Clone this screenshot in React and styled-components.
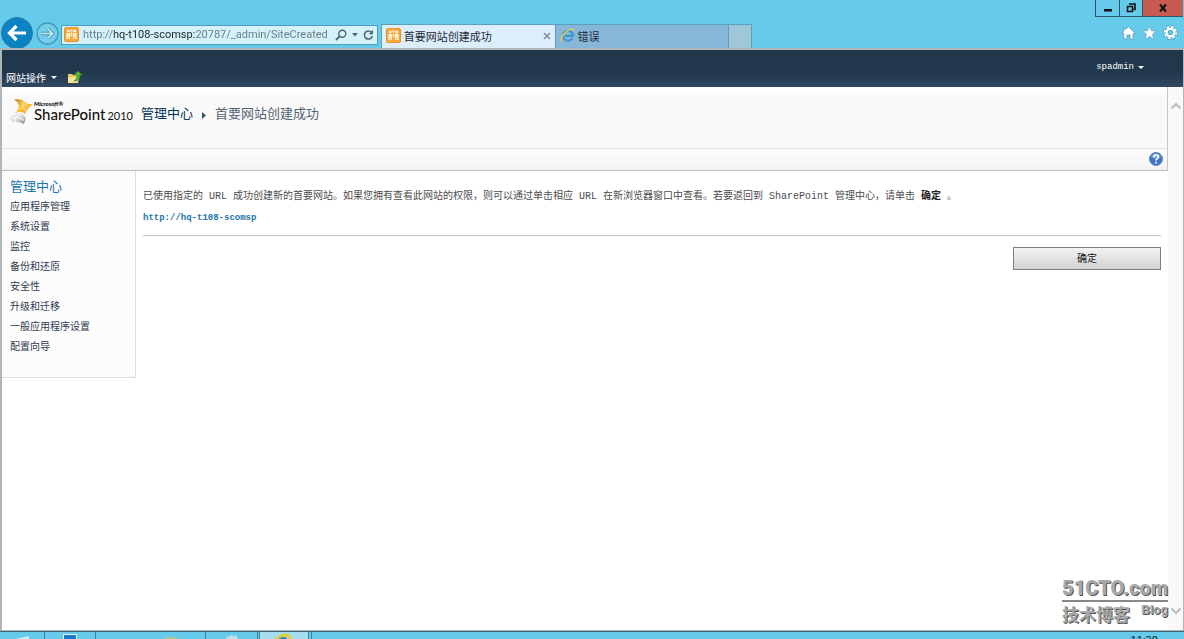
import React from "react";
import styled, { createGlobalStyle } from "styled-components";

const sections = [
  "应用程序管理",
  "系统设置",
  "监控",
  "备份和还原",
  "安全性",
  "升级和迁移",
  "一般应用程序设置",
  "配置向导"
];

const SiteIcon = () => (
  <svg width="15" height="15" viewBox="0 0 15 15">
    <rect x="0.5" y="0.5" width="14" height="14" rx="1.5" fill="#f8aa3c" stroke="#e9922a" />
    <path d="M3 3h2.500v2H3zM9.500 3H12v2H9.500zM6.500 2.500h2v2h-2z" fill="#fff6df" />
    <path d="M2.500 6H6v6H4.800V9.500H4V12H2.500zM9 6h3.500v6H11V9.500h-.8V12H9zM6.800 5.500h1.400V9H6.800z" fill="#fff6df" />
  </svg>
);

const BrowserIcon = () => (
  <svg width="15" height="15" viewBox="0 0 15 15">
    <path
      d="M12.300 10.300A5 5 0 1 1 13 7.800H4.500"
      fill="none"
      stroke="#3d97d3"
      strokeWidth="2.200"
    />
    <path
      d="M2 13.500C-.5 12 3 5 8 2.300c3-1.700 5.500-1.700 5.300.7"
      fill="none"
      stroke="#e6cf4d"
      strokeWidth="1.400"
    />
  </svg>
);

const SharePointMark = () => (
  <svg width="24" height="28" viewBox="0 0 24 28">
    <defs>
      <linearGradient id="gold" x1="0" y1="0" x2="1" y2="1">
        <stop offset="0" stopColor="#c9791f" />
        <stop offset="0.45" stopColor="#fbc63f" />
        <stop offset="1" stopColor="#ee9420" />
      </linearGradient>
      <linearGradient id="silver" x1="0" y1="0" x2="1" y2="1">
        <stop offset="0" stopColor="#ededed" />
        <stop offset="0.6" stopColor="#cfcfcf" />
        <stop offset="1" stopColor="#777777" />
      </linearGradient>
    </defs>
    <path d="M4 2.500C9 1.500 14 3 16.500 6.500L23 7.500C20 9 17.500 12 15 17 12.500 14.500 9 14.500 5 16.500 8 13 9.500 10 8.500 7.500 8 5.500 6.500 4 4 2.500z" fill="url(#gold)" />
    <path d="M9 5c3 0 5 1 7 3M10 8.500c3-.5 6 0 8 1M9.500 12c2.500-1 5-1 7 .5M13 3.500c-1 4 0 7 2 11" fill="none" stroke="#fde7a0" strokeWidth="0.700" />
    <path d="M1 20.500C4 17.500 11 15 14.500 18.500 16.500 21 15.500 24 13.500 27 10.500 24.500 7 25.500 3 25 0 24 0 22 1 20.500z" fill="url(#silver)" />
    <path d="M2 21.500c4-2 8-1.500 12 2M2 24c2-4 5-6 9-6M6 25.500c-1-2-1-4 1-6.500" fill="none" stroke="#ffffff" strokeWidth="0.900" />
  </svg>
);

const FolderUpIcon = () => (
  <svg width="14" height="13" viewBox="0 0 14 13">
    <path d="M0 3h4l1 1h5v8H0z" fill="#e8c765" />
    <path d="M0 6h11l-1 6H0z" fill="#f8e29a" />
    <path d="M10 0l4 4h-2c0 4-2 6-6 6 2-1 3-3 3-6H6z" fill="#52b836" stroke="#2c8a1c" strokeWidth="0.600" />
  </svg>
);

const App = () => {
  return (
    <Window>
      <GlobalStyle />

      <Chrome>
        <Caption>
          <CaptionButton aria-label="Minimize" $width={23}>
            <svg width="10" height="10" viewBox="0 0 10 10">
              <path d="M1 6h8v2.500H1z" fill="#111" />
            </svg>
          </CaptionButton>
          <CaptionButton aria-label="Restore" $width={22}>
            <svg width="10" height="10" viewBox="0 0 10 10">
              <path d="M3 1h6v5.500H7.500M1.500 3.500h5v5h-5z" fill="none" stroke="#111" strokeWidth="1.600" />
            </svg>
          </CaptionButton>
          <CaptionButton aria-label="Close" $width={40} $close>
            <svg width="10" height="10" viewBox="0 0 10 10">
              <path d="M2 1.500l6 7M8 1.500l-6 7" stroke="#111" strokeWidth="2" />
            </svg>
          </CaptionButton>
        </Caption>

        <Navigation>
          <BackButton aria-label="Back">
            <svg width="32" height="32" viewBox="0 0 32 32">
              <circle cx="16" cy="16" r="15.500" fill="#0b82c4" stroke="#2b7ba3" />
              <path d="M25 16H9M15.500 9l-7 7 7 7" fill="none" stroke="#fff" strokeWidth="3.200" />
            </svg>
          </BackButton>
          <ForwardButton aria-label="Forward">
            <svg width="23" height="23" viewBox="0 0 23 23">
              <circle cx="11.500" cy="11.500" r="10.500" fill="#74cdea" stroke="#4599b8" strokeWidth="1.300" />
              <path d="M5.500 11.500h11M12 7l4.500 4.500L12 16" fill="none" stroke="#4599b8" strokeWidth="3.400" />
              <path d="M5.500 11.500h11M12 7l4.500 4.500L12 16" fill="none" stroke="#c9edf8" strokeWidth="1.600" />
            </svg>
          </ForwardButton>

          <AddressBar>
            <SiteIcon />
            <Address
              type="text"
              aria-label="Address"
              defaultValue="http://hq-t108-scomsp:20787/_admin/SiteCreated"
            />
            <AddressButton aria-label="Search">
              <svg width="12" height="12" viewBox="0 0 12 12">
                <path d="M1 11l4-4" stroke="#4d6670" strokeWidth="1.800" />
                <circle cx="7.300" cy="4.700" r="3.500" fill="none" stroke="#4d6670" strokeWidth="1.400" />
              </svg>
            </AddressButton>
            <AddressButton aria-label="Show addresses">
              <svg width="6" height="4" viewBox="0 0 6 4">
                <path d="M0 0h6L3 3.500z" fill="#4d6670" />
              </svg>
            </AddressButton>
            <AddressButton aria-label="Refresh">
              <svg width="11" height="12" viewBox="0 0 11 12">
                <path d="M9 4.300A4 4 0 1 0 9.300 7" fill="none" stroke="#4d6670" strokeWidth="1.500" />
                <path d="M10 .8v4.400H5.800z" fill="#4d6670" />
              </svg>
            </AddressButton>
          </AddressBar>

          <Tabs>
            <Tab $active>
              <SiteIcon />
              <TabTitle>首要网站创建成功</TabTitle>
              <TabClose aria-label="Close tab">
                <svg width="8" height="8" viewBox="0 0 8 8">
                  <path d="M1 1l6 6M7 1L1 7" stroke="#7b8d99" strokeWidth="1.500" />
                </svg>
              </TabClose>
            </Tab>
            <Tab>
              <BrowserIcon />
              <TabTitle>错误</TabTitle>
            </Tab>
            <NewTab aria-label="New tab" />
          </Tabs>

          <Tools>
            <ToolButton aria-label="Home">
              <svg width="15" height="14" viewBox="0 0 15 14">
                <path
                  d="M7.500.8L14 7l-1 1-.8-.7V13H9V9H6v4H2.800V7.300L2 8 1 7l2-2V2h1.800v1.300z"
                  fill="#fff"
                  stroke="#5a98ae"
                  strokeWidth="0.800"
                />
              </svg>
            </ToolButton>
            <ToolButton aria-label="Favorites">
              <svg width="15" height="14" viewBox="0 0 15 14">
                <path
                  d="M7.500.3l1.900 4.500 5 .2-3.900 3.200 1.400 5.200-4.400-3-4.400 3 1.400-5.200L.6 5l5-.2z"
                  fill="#fff"
                  stroke="#5a98ae"
                  strokeWidth="0.600"
                />
              </svg>
            </ToolButton>
            <ToolButton aria-label="Settings">
              <svg width="15" height="15" viewBox="0 0 15 15">
                <circle cx="7.500" cy="7.500" r="6" fill="none" stroke="#5a98ae" strokeWidth="3" strokeDasharray="2.700 2" />
                <circle cx="7.500" cy="7.500" r="5.700" fill="none" stroke="#fff" strokeWidth="2" strokeDasharray="2.200 2.277" />
                <circle cx="7.500" cy="7.500" r="3.700" fill="none" stroke="#fff" strokeWidth="2.200" />
                <circle cx="7.500" cy="7.500" r="2.300" fill="#66cbea" stroke="#5a98ae" strokeWidth="0.800" />
              </svg>
            </ToolButton>
          </Tools>
        </Navigation>
      </Chrome>

      <Page>
        <Ribbon>
          <SiteActions>
            <RibbonButton>
              网站操作
              <Caret />
            </RibbonButton>
            <IconButton aria-label="Navigate up">
              <FolderUpIcon />
            </IconButton>
          </SiteActions>
          <UserButton>
            spadmin
            <Caret />
          </UserButton>
        </Ribbon>

        <Viewport>
          <Content>
            <TitleArea>
              <Logo>
                <SharePointMark />
                <LogoText>
                  <Maker>Microsoft®</Maker>
                  <Product>
                    SharePoint<Year>2010</Year>
                  </Product>
                </LogoText>
              </Logo>
              <Breadcrumb>
                <Crumb href="#home">管理中心</Crumb>
                <svg width="4" height="7" viewBox="0 0 4 7">
                  <path d="M0 0v7l4-3.500z" fill="#42515f" />
                </svg>
                <Current>首要网站创建成功</Current>
              </Breadcrumb>
            </TitleArea>

            <HelpBar>
              <HelpLink href="#help" aria-label="Help">
                <svg width="14" height="14" viewBox="0 0 14 14">
                  <circle cx="7" cy="7" r="6.500" fill="#4474c4" stroke="#5f83bd" />
                  <path d="M2 5a5.300 5.300 0 0 1 10 0c-3 2-7 2-10 0z" fill="#7aa0dc" />
                  <path
                    d="M4.800 5.300c0-3 4.500-3 4.500-.3C9.300 6.700 7.100 6.600 7.100 8.500M7.100 9.800v1.600"
                    fill="none"
                    stroke="#fff"
                    strokeWidth="1.600"
                  />
                </svg>
              </HelpLink>
            </HelpBar>

            <Body>
              <Sidebar>
                <SidebarTitle href="#home">管理中心</SidebarTitle>
                {sections.map(section => (
                  <SidebarLink href="#section" key={section}>
                    {section}
                  </SidebarLink>
                ))}
              </Sidebar>

              <Main>
                <Message>
                  已使用指定的 URL 成功创建新的首要网站。如果您拥有查看此网站的权限，则可以通过单击相应
                  URL 在新浏览器窗口中查看。若要返回到 SharePoint 管理中心，请单击 <b>确定</b> 。
                </Message>
                <SiteLink href="http://hq-t108-scomsp">http://hq-t108-scomsp</SiteLink>
                <Divider />
                <Confirm>确定</Confirm>
              </Main>
            </Body>
          </Content>

          <Scrollbar>
            <svg width="12" height="8" viewBox="0 0 12 8">
              <path d="M1.500 6.500L6 2l4.500 4.500" fill="none" stroke="#bcbcbc" strokeWidth="2" />
            </svg>
            <svg width="12" height="8" viewBox="0 0 12 8">
              <path d="M1.500 1.500L6 6l4.500-4.500" fill="none" stroke="#bcbcbc" strokeWidth="2" />
            </svg>
          </Scrollbar>
        </Viewport>
      </Page>

      <Taskbar>
        <Task $width={44}>
          <svg width="20" height="7" viewBox="0 0 20 7">
            <path d="M3 7l14-3v3z" fill="#c9e9f5" />
          </svg>
        </Task>
        <Task $width={50}>
          <svg width="14" height="7" viewBox="0 0 14 7">
            <path d="M0 2h14v5H0z" fill="#dff1fa" />
            <path d="M1 3h12v4H1z" fill="#1c7bc4" />
          </svg>
        </Task>
        <Task $width={109}>
          <svg width="60" height="7" viewBox="0 0 60 7">
            <path d="M44 5h12v2H44z" fill="#a8c795" />
          </svg>
        </Task>
        <Task $width={51}>
          <svg width="14" height="7" viewBox="0 0 14 7">
            <path d="M1 7l1-3 2 1 2-2 3 1 2-1 2 4z" fill="#c3dce8" />
          </svg>
        </Task>
        <Task $width={1} />
        <Task $width={48} $active>
          <svg width="20" height="7" viewBox="0 0 20 7">
            <path d="M1 7c3-4 8-6 12-5 3 0 5 2 4 5h-3c0-2-2-3-4-2L6 7z" fill="#e3cf35" />
            <path d="M5 7c1-2 7-3 8 0z" fill="#2b83bd" />
          </svg>
        </Task>
        <Task $width={2} />
        <Clock>11:38</Clock>
      </Taskbar>

      <Watermark>
        <WatermarkName>51CTO.com</WatermarkName>
        <WatermarkRow>
          <WatermarkChinese>技术博客</WatermarkChinese>
          <WatermarkBlog>Blog</WatermarkBlog>
        </WatermarkRow>
      </Watermark>
    </Window>
  );
};

// Styled components
const mono = `"Liberation Mono", "Noto Sans CJK SC", monospace`;
const sans = `Roboto, "Noto Sans CJK SC", sans-serif`;

const GlobalStyle = createGlobalStyle`
  * {
    box-sizing: border-box;
  }

  body {
    margin: 0;
    background: #66cbea;
    font-family: ${mono};
    font-size: 10px;
  }

  button {
    padding: 0;
    border: none;
    background: none;
    font: inherit;
    color: inherit;
    cursor: pointer;
  }

  a {
    text-decoration: none;
  }

  svg {
    display: block;
    flex: none;
  }
`;

const Window = styled.div`
  position: relative;
  display: flex;
  flex-direction: column;
  height: 100vh;
  overflow: hidden;
`;

const Chrome = styled.header`
  font-family: ${sans};
`;

const Caption = styled.div`
  display: flex;
  justify-content: flex-end;
  height: 17px;
  padding-right: 1px;
`;

const CaptionButton = styled.button`
  display: flex;
  align-items: center;
  justify-content: center;
  box-sizing: content-box;
  width: ${props => props.$width}px;
  height: 16px;
  border-left: 1px solid #2d5664;
  border-bottom: 1px solid #2d5664;
  background: ${props => (props.$close ? "#c75b50" : "transparent")};
`;

const Navigation = styled.div`
  display: flex;
  align-items: center;
  height: 31px;
  padding: 0 6px 0 1px;
`;

const BackButton = styled.button`
  width: 32px;
  height: 31px;
  overflow: hidden;
`;

const ForwardButton = styled.button`
  margin: 2px 2px 0 3px;
`;

const AddressBar = styled.div`
  display: flex;
  flex: 310 1 0;
  align-items: center;
  gap: 4px;
  height: 20px;
  margin-top: 4px;
  padding: 0 3px 0 2px;
  border: 1px solid #4a9fbd;
  background: #d5f1fa;
`;

const Address = styled.input`
  flex: 1;
  min-width: 0;
  padding: 0;
  border: none;
  outline: none;
  background: linear-gradient(to right, #667a83 31px, #17262c 31px, #17262c 112px, #667a83 112px);
  background-clip: text;
  color: transparent;
  font-family: ${sans};
  font-size: 11px;
`;

const AddressButton = styled.button`
  margin-left: 1px;
`;

const Tabs = styled.nav`
  display: flex;
  flex: 372 1 0;
  align-self: stretch;
  margin: 7px 0 0 3px;
`;

const Tab = styled.div`
  display: flex;
  flex: 1;
  align-items: center;
  gap: 3px;
  padding: 0 4px 2px;
  border: 1px solid #5b9fbe;
  border-bottom: none;
  margin-right: -1px;
  background: ${props => (props.$active ? "#dcedfc" : "#86b7d9")};
  color: #1f2b33;
  font-size: 11px;
`;

const TabTitle = styled.span`
  flex: 1;
`;

const TabClose = styled.button``;

const NewTab = styled.button`
  width: 24px;
  border: 1px solid #5b9fbe;
  border-bottom: none;
  background: #9fc7d8;
`;

const Tools = styled.div`
  display: flex;
  flex: 426 1 0;
  justify-content: flex-end;
  gap: 6px;
`;

const ToolButton = styled.button``;

const Page = styled.div`
  display: flex;
  flex: 1;
  flex-direction: column;
  min-height: 0;
  border: 1px solid #b0b5b8;
  border-width: 2px 1px 1px 2px;
  background: #ffffff;
`;

const Ribbon = styled.div`
  display: flex;
  align-items: flex-end;
  justify-content: space-between;
  height: 37px;
  background: linear-gradient(#21374c 60%, #314861);
  color: #ffffff;
`;

const SiteActions = styled.div`
  display: flex;
  align-items: center;
  gap: 11px;
  padding: 0 4px 2px;
`;

const RibbonButton = styled.button`
  display: flex;
  align-items: center;
  gap: 5px;
`;

const IconButton = styled.button``;

const UserButton = styled.button`
  display: flex;
  align-items: center;
  align-self: center;
  gap: 4px;
  padding: 0 39px 3px 0;
  font-family: ${mono};
  font-size: 9px;
`;

const Caret = styled.span`
  border: 3px solid transparent;
  border-top-color: #ffffff;
  border-bottom: none;
`;

const Viewport = styled.div`
  display: flex;
  flex: 1;
  min-height: 0;
`;

const Content = styled.div`
  flex: 1;
  min-width: 0;
`;

const TitleArea = styled.div`
  display: flex;
  align-items: flex-start;
  gap: 8px;
  height: 62px;
  padding: 10px 8px 0;
  border-right: 1px solid #c4c7ca;
  border-bottom: 1px solid #e4e4e4;
  background: linear-gradient(#ffffff, #f9f9f9 20%);
`;

const Logo = styled.div`
  display: flex;
`;

const LogoText = styled.div`
  display: flex;
  flex-direction: column;
  padding-top: 4px;
  color: #111111;
  font-family: Lato, sans-serif;
`;

const Maker = styled.span`
  font-size: 6px;
  font-style: italic;
  font-weight: 900;
  line-height: 6px;
`;

const Product = styled.span`
  font-size: 15px;
  font-weight: 500;
  line-height: 15px;
  white-space: nowrap;
`;

const Year = styled.span`
  margin-left: 2px;
  font-size: 11px;
  font-weight: 400;
`;

const Breadcrumb = styled.nav`
  display: flex;
  align-items: center;
  gap: 9px;
  padding-top: 9px;
  font-size: 13px;
  line-height: 18px;
`;

const Crumb = styled.a`
  color: #003759;
`;

const Current = styled.span`
  color: #566472;
`;

const HelpBar = styled.div`
  display: flex;
  align-items: flex-start;
  justify-content: flex-end;
  height: 22px;
  padding: 3px 4px 0;
  border-right: 1px solid #c4c7ca;
  border-bottom: 1px solid #b8babd;
  background: linear-gradient(#fdfdfd, #f3f3f4);
`;

const HelpLink = styled.a``;

const Body = styled.div`
  display: flex;
  align-items: flex-start;
`;

const Sidebar = styled.nav`
  display: flex;
  flex: none;
  flex-direction: column;
  width: 134px;
  padding: 7px 8px 19px;
  border-right: 1px solid #dbddde;
  border-bottom: 1px solid #dbddde;
  background: #fcfcfc;
`;

const SidebarTitle = styled.a`
  color: #1a75a8;
  font-size: 13px;
  line-height: 20px;
`;

const SidebarLink = styled.a`
  color: #2f4052;
  line-height: 20px;
`;

const Main = styled.main`
  display: flex;
  flex: 1;
  flex-direction: column;
  align-items: flex-start;
  min-width: 0;
  padding: 15px 7px 0;
`;

const Message = styled.p`
  margin: 0;
  color: #4c4c4c;
  line-height: 22px;

  b {
    color: #222222;
  }
`;

const SiteLink = styled.a`
  color: #1a75a8;
  font-size: 9px;
  font-weight: bold;
  line-height: 20px;
`;

const Divider = styled.hr`
  align-self: stretch;
  margin: 7px 0 11px;
  border: none;
  border-top: 1px solid #c4c4c4;
`;

const Confirm = styled.button`
  align-self: flex-end;
  width: 148px;
  height: 23px;
  padding-bottom: 2px;
  border: 1px solid #7b7f83;
  background: linear-gradient(#f3f3f3, #d3d3d3);
  color: #111111;
`;

const Scrollbar = styled.div`
  display: flex;
  flex-direction: column;
  align-items: center;
  justify-content: space-between;
  width: 15px;
  padding: 15px 0;
  background: #f9f9f9;
`;

const Taskbar = styled.footer`
  display: flex;
  height: 8px;
  overflow: hidden;
  border-top: 1px solid #3d6474;
  background: #66cbea;
`;

const Task = styled.button`
  display: flex;
  justify-content: center;
  box-sizing: content-box;
  width: ${props => props.$width}px;
  border-right: 1px solid #3f8197;
  background: ${props => (props.$active ? "#a5def1" : "transparent")};
`;

const Clock = styled.span`
  margin-left: auto;
  padding: 3px 26px 0 0;
  color: #10242c;
  font-family: ${sans};
  font-size: 11px;
  line-height: 12px;
`;

const Watermark = styled.div`
  position: absolute;
  right: 16px;
  bottom: 13px;
  color: #a9a9a9;
  text-shadow: 1px 1px 0 #555555;
`;

const WatermarkName = styled.div`
  border-bottom: 2px solid #888888;
  font-family: Roboto, sans-serif;
  font-size: 20px;
  font-weight: 900;
  line-height: 24px;
`;

const WatermarkRow = styled.div`
  display: flex;
  justify-content: space-between;
`;

const WatermarkChinese = styled.span`
  font-family: "Noto Sans CJK SC", sans-serif;
  font-size: 17px;
  font-weight: bold;
  line-height: 24px;
`;

const WatermarkBlog = styled.span`
  font-family: "Liberation Sans", sans-serif;
  font-size: 12px;
  font-weight: bold;
  line-height: 16px;
`;

export default App;
